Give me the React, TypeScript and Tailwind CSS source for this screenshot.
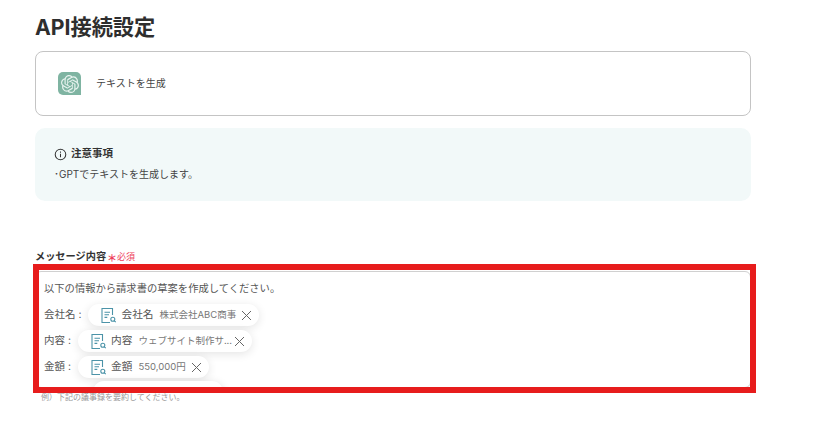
import React from "react";
import { SiOpenai } from "react-icons/si";

const FONT = { fontFamily: 'Inter, "Noto Sans CJK JP", sans-serif' };

function DocIcon() {
  return (
    <svg width="17" height="17" viewBox="0 0 17 17" fill="none" stroke="#4b93a8" strokeWidth="1.1" className="shrink-0">
      <path d="M12.500 8V1.500H2v14h8" />
      <path d="M4.500 5.200h5.500M4.500 7.800h4.500M4.500 10.400h2.800" />
      <circle cx="12.800" cy="12.300" r="2" />
      <path d="M14.300 13.800l1.500 1.400" />
    </svg>
  );
}

function Pill({ label, value, widthClass }: { label: string; value: string; widthClass: string }) {
  return (
    <div className={`ml-[7px] flex h-[22px] items-center rounded-full bg-white pl-[12px] shadow-[0_2px_10px_rgba(0,0,0,0.11)] ${widthClass}`}>
      <DocIcon />
      <span className="ml-[4px] text-[10.7px] leading-none whitespace-nowrap text-[#555]">{label}</span>
      <span className="ml-[6px] text-[9.5px] leading-none whitespace-nowrap text-[#777]">{value}</span>
      <svg width="11" height="11" viewBox="0 0 11 11" stroke="#666" strokeWidth="1" className="mr-[7px] ml-auto shrink-0">
        <path d="M1 1l9 9M10 1l-9 9" />
      </svg>
    </div>
  );
}

function Row({ name, pill }: { name: string; pill: React.ReactNode }) {
  return (
    <div className="flex h-[22px] items-center">
      <span className="text-[10.5px] whitespace-nowrap text-[#555]">{name}</span>
      {pill}
    </div>
  );
}

export default function App() {
  return (
    <div style={FONT} className="relative h-[421px] w-[814px] overflow-hidden bg-white px-[35px] pt-[14px] text-[#333]">
      <h1 className="h-[26px] text-[21.2px] leading-[26px] font-bold text-[#2e2e2e]">API接続設定</h1>

      <div className="mt-[11px] flex h-[65px] w-[716px] items-center rounded-[8px] border border-[#c4c4c4] pl-[22px]">
        <div className="flex h-[23px] w-[23px] items-center justify-center rounded-[5px] rounded-br-none bg-[#7fb4a2]">
          <SiOpenai size={18} color="#e8f3ef" />
        </div>
        <span className="ml-[15px] text-[10px] text-[#444]">テキストを生成</span>
      </div>

      <div className="mt-[12px] h-[73px] w-[716px] rounded-[10px] bg-[#f2f9f9] pt-[19px] pl-[19px]">
        <div className="flex h-[14px] items-center">
          <svg width="13" height="13" viewBox="0 0 14 14" fill="none" stroke="#333" strokeWidth="1.1">
            <circle cx="7" cy="7" r="5.700" />
            <path d="M7 6.300v3.700M7 3.900v1.100" />
          </svg>
          <span className="ml-[4px] text-[10.5px] font-bold text-[#333]">注意事項</span>
        </div>
        <p className="mt-[6px] text-[10px] leading-[14px] text-[#444]">･GPTでテキストを生成します。</p>
      </div>

      <div className="mt-[49px] flex h-[14px] items-center">
        <span className="text-[10.2px] font-bold text-[#333]">メッセージ内容</span>
        <span className="mt-[3px] ml-[1px] text-[10px] font-bold text-[#ee3f5c]">＊</span>
        <span className="text-[9px] text-[#ee3f5c]">必須</span>
      </div>

      <div className="mt-[7px] h-[117px] w-[716px] overflow-hidden rounded-[6px] border border-[#d0d0d0] pt-[8px] pl-[8px]">
        <p className="h-[17px] text-[10.3px] leading-[17px] text-[#555]">以下の情報から請求書の草案を作成してください。</p>
        <div className="mt-[7px] flex flex-col gap-[4px]">
          <Row name="会社名 :" pill={<Pill label="会社名" value="株式会社ABC商事" widthClass="w-[171px]" />} />
          <Row name="内容 :" pill={<Pill label="内容" value="ウェブサイト制作サ..." widthClass="w-[174px]" />} />
          <Row name="金額 :" pill={<Pill label="金額" value="550,000円" widthClass="w-[131px]" />} />
          <div className="-mt-[1px] ml-[49px] h-[22px] w-[130px] rounded-full bg-white shadow-[0_2px_10px_rgba(0,0,0,0.14)]" />
        </div>
      </div>

      <p className="mt-[3px] ml-[6px] text-[8px] leading-[12px] text-[#999]">例）下記の議事録を要約してください。</p>

      <div className="pointer-events-none absolute top-[264px] left-[33px] h-[129px] w-[723px] border-[6px] border-[#e71c1c]" />
    </div>
  );
}
